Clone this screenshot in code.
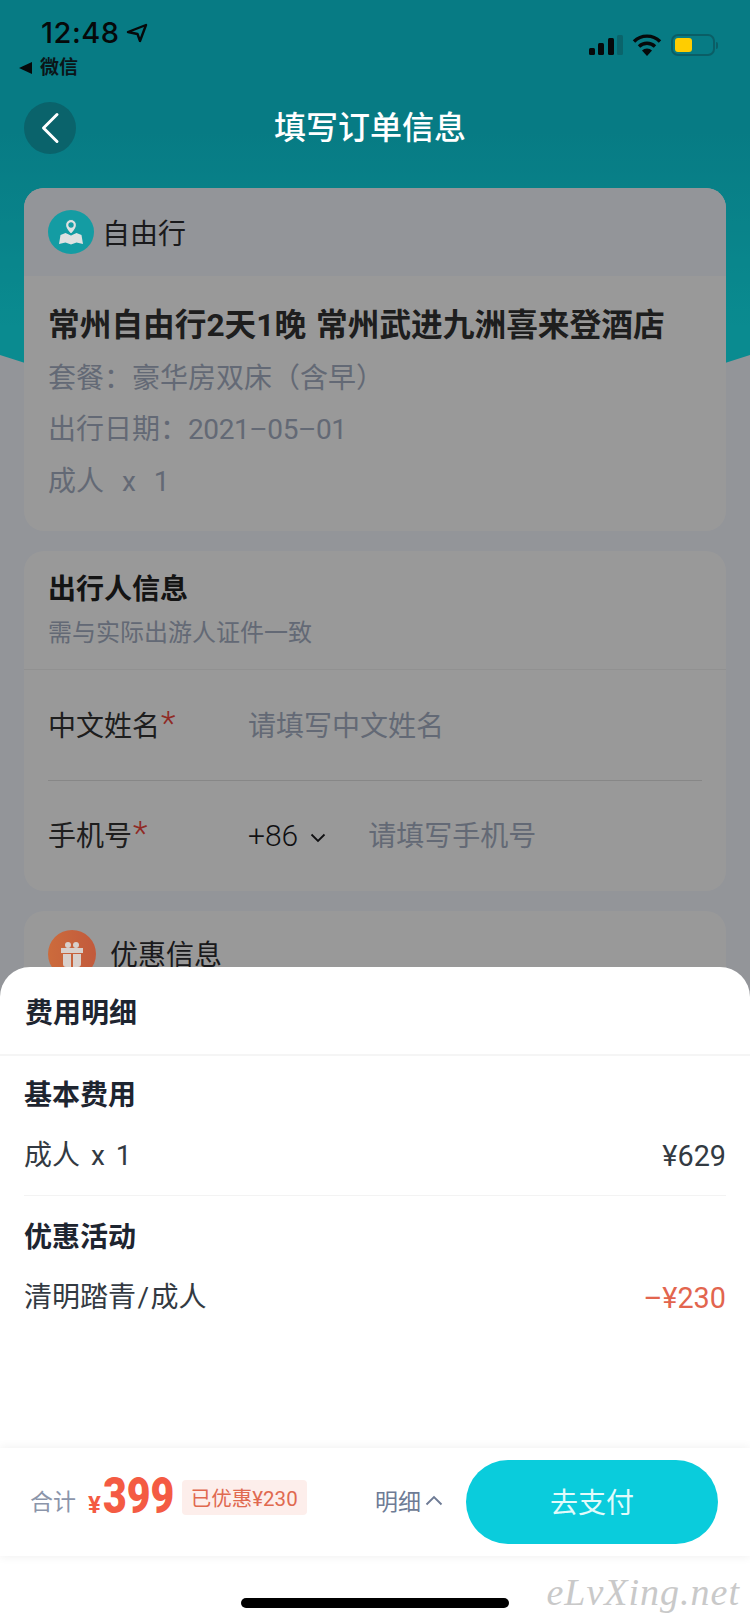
<div class="page">
  <svg class="hero" viewBox="0 0 750 480" width="750" height="480" aria-hidden="true">
    <defs>
      <linearGradient id="heroFill" x1="0" y1="0" x2="0" y2="1">
        <stop offset="0.3" stop-color="#0dcddc" />
        <stop offset="0.78" stop-color="#11e8f0" />
      </linearGradient>
    </defs>
    <path d="M0 0H750V355Q375 480 0 355Z" fill="url(#heroFill)" />
  </svg>

  <div class="content">
    <div class="spacer-top"></div>
    <section class="card">
      <div class="trip-head">
        <span class="round teal">
          <svg viewBox="0 0 46 44" width="46" height="44" aria-hidden="true">
            <path d="M12.500 25l5-2 5.500 2.500 5.500-2.500 5 2 1.500 9-6.500-1.500-5.500 2-5.500-2-6.500 1.500z" fill="#dfe1e1" />
            <path fill-rule="evenodd" d="M23 9.500a5.500 5.500 0 0 1 5.500 5.500c0 3.200-3.300 7.200-5.500 9.500c-2.200-2.300-5.500-6.300-5.500-9.500a5.500 5.500 0 0 1 5.500-5.500zm0 3.400a2.100 2.100 0 1 0 0 4.200a2.100 2.100 0 0 0 0-4.200z" fill="#dfe1e1" stroke="#149ca3" stroke-width="1.200" />
          </svg>
        </span>
        <span class="head-text trip-label">自由行</span>
      </div>
      <div class="trip-body">
        <h2 class="trip-title">常州自由行2天1晚 常州武进九洲喜来登酒店</h2>
        <p class="line">套餐：豪华房双床（含早）</p>
        <p class="line">出行日期：<span class="tight">2021–05–01</span></p>
        <p class="line last"><span class="qty">成人&nbsp; x&nbsp; 1</span></p>
      </div>
    </section>

    <section class="card">
      <div class="info-head">
        <h3 class="info-title">出行人信息</h3>
        <p class="info-sub">需与实际出游人证件一致</p>
      </div>
      <div class="row ruled">
        <span class="label">中文姓名<i class="req">*</i></span>
        <span class="placeholder">请填写中文姓名</span>
      </div>
      <div class="row">
        <span class="label second-label">手机号<i class="req">*</i></span>
        <span class="code">+86</span>
        <svg class="code-arrow" viewBox="0 0 16 10" width="16" height="10" aria-hidden="true">
          <path d="M1.500 1.500L8 8l6.500-6.500" fill="none" stroke="#1c1c1f" stroke-width="1.800" />
        </svg>
        <span class="placeholder lifted">请填写手机号</span>
      </div>
    </section>

    <section class="card">
      <div class="promo-head">
        <span class="round orange">
          <svg viewBox="0 0 48 48" width="48" height="48" aria-hidden="true">
            <path d="M13 18h22v5H13z" fill="#d8d0cc" />
            <path d="M15 24h8v13h-5a3 3 0 0 1-3-3zM25 24h8v10a3 3 0 0 1-3 3h-5z" fill="#d8d0cc" />
            <circle cx="20" cy="15" r="3" fill="#d8d0cc" />
            <circle cx="28" cy="15" r="3" fill="#d8d0cc" />
          </svg>
        </span>
        <span class="head-text promo-label">优惠信息</span>
      </div>
      <div class="promo-rest"></div>
    </section>
  </div>

  <div class="scrim"></div>

  <header class="top">
    <div class="status">
      <div class="status-left">
        <div class="time-row">
          <span class="time">12:48</span>
          <svg viewBox="0 0 22 20" width="22" height="20" aria-hidden="true">
            <path d="M2 9L20 2l-6 16-2.500-7z" fill="none" stroke="#06090a" stroke-width="2.400" stroke-linejoin="round" />
          </svg>
        </div>
        <div class="back-app">
          <svg viewBox="0 0 13 12" width="13" height="12" aria-hidden="true"><path d="M0 6L13 0v12z" fill="#06090a" /></svg>
          <span>微信</span>
        </div>
      </div>
      <div class="status-right">
        <svg viewBox="0 0 34 20" width="34" height="20" aria-hidden="true">
          <rect x="0" y="13" width="6" height="7" rx="1.500" fill="#06090a" />
          <rect x="9" y="8" width="6" height="12" rx="1.500" fill="#06090a" />
          <rect x="19" y="3" width="6" height="17" rx="1.500" fill="#06090a" />
          <rect x="28" y="0" width="6" height="20" rx="1.500" fill="#0a646b" />
        </svg>
        <svg viewBox="0 0 30 22" width="30" height="22" aria-hidden="true">
          <path d="M2 7.500a18.500 18.500 0 0 1 26 0" fill="none" stroke="#06090a" stroke-width="3.400" />
          <path d="M7 12.500a11.500 11.500 0 0 1 16 0" fill="none" stroke="#06090a" stroke-width="3.400" />
          <path d="M15 22l-5-5.500a7 7 0 0 1 10 0z" fill="#06090a" />
        </svg>
        <div class="battery"><span class="battery-fill"></span></div>
        <span class="battery-nub"></span>
      </div>
    </div>
    <nav class="nav">
      <span class="back">
        <svg viewBox="0 0 20 32" width="20" height="32" aria-hidden="true">
          <path d="M17 2.500L3.500 16 17 29.500" fill="none" stroke="#fff" stroke-width="3" stroke-linecap="round" stroke-linejoin="round" />
        </svg>
      </span>
      <h1 class="nav-title">填写订单信息</h1>
    </nav>
  </header>

  <aside class="sheet">
    <div class="sheet-head">费用明细</div>
    <div class="fees">
      <div class="fee-block">
        <h4 class="fee-title">基本费用</h4>
        <div class="fee-row"><span class="qty-small">成人 x 1</span><span class="money">¥629</span></div>
      </div>
      <div class="fee-block second">
        <h4 class="fee-title">优惠活动</h4>
        <div class="fee-row"><span>清明踏青<span class="slash">/</span>成人</span><span class="money minus">–¥230</span></div>
      </div>
    </div>
    <div class="bar">
      <span class="total-label">合计</span>
      <span class="yen">¥</span>
      <span class="amount">399</span>
      <span class="saved">已优惠¥230</span>
      <span class="detail">明细
        <svg viewBox="0 0 18 11" width="18" height="11" aria-hidden="true">
          <path d="M1.500 9.500L9 2l7.500 7.500" fill="none" stroke="#6e7b95" stroke-width="1.900" />
        </svg>
      </span>
      <button class="pay" type="button">去支付</button>
    </div>
    <div class="home"><span class="home-pill"></span></div>
    <span class="watermark">eLvXing.net</span>
  </aside>
</div>

<style>
  :global(body) {
    margin: 0;
  }
  .page {
    position: relative;
    width: 750px;
    height: 1624px;
    overflow: hidden;
    background: #f5f8ff;
    font-family: Roboto, "Noto Sans CJK SC", sans-serif;
    color: #333;
  }
  h1, h2, h3, h4, p {
    margin: 0;
    font-weight: 400;
  }
  i {
    font-style: normal;
  }
  .hero {
    position: absolute;
    left: 0;
    top: 0;
    display: block;
  }
  .content {
    position: relative;
    display: flex;
    flex-direction: column;
    gap: 20px;
    padding: 0 24px;
  }
  .spacer-top {
    height: 168px;
  }
  .card {
    background: #fff;
    border-radius: 20px;
    overflow: hidden;
  }
  .trip-head {
    display: flex;
    align-items: center;
    gap: 8px;
    height: 88px;
    padding-left: 24px;
    background: #f5f8ff;
  }
  .round {
    display: block;
    border-radius: 50%;
    flex: none;
    position: relative;
    z-index: 1;
  }
  .round svg {
    display: block;
  }
  .teal {
    width: 46px;
    height: 44px;
    background: #149ca3;
  }
  .orange {
    width: 48px;
    height: 48px;
    background: linear-gradient(90deg, #cc6b3c, #c25a3c);
  }
  .head-text {
    font-size: 28px;
    line-height: 40px;
    color: #2c2c30;
  }
  .trip-label {
    margin-top: 6px;
  }
  .promo-label {
    margin-top: 4px;
  }
  .trip-body {
    padding: 28px 24px 24px;
  }
  .trip-title {
    font-size: 31.700px;
    line-height: 44px;
    font-weight: 700;
    word-spacing: 2px;
    white-space: nowrap;
    color: #333;
    margin-bottom: 5px;
  }
  .line {
    font-size: 28px;
    line-height: 51px;
    color: #a6afc4;
  }
  .tight {
    letter-spacing: -0.400px;
  }
  .qty {
    word-spacing: 2px;
  }
  .line.last {
    margin-top: 1px;
  }
  .info-head {
    padding: 20px 24px 19px;
    border-bottom: 1px solid #f2f2f2;
  }
  .info-title {
    font-size: 28px;
    line-height: 38px;
    font-weight: 700;
    color: #222;
  }
  .info-sub {
    margin-top: 7px;
    font-size: 24px;
    line-height: 34px;
    color: #a6afc4;
  }
  .row {
    display: flex;
    align-items: center;
    height: 110px;
    padding: 0 24px;
    font-size: 28px;
    position: relative;
  }
  .row.ruled::after {
    content: "";
    position: absolute;
    left: 24px;
    right: 24px;
    bottom: 0;
    height: 1px;
    background: #e2e2e2;
  }
  .row.ruled {
    height: 111px;
    padding-bottom: 1px;
    box-sizing: border-box;
  }
  .label {
    width: 200px;
    flex: none;
    color: #333;
    line-height: 40px;
    margin-top: 4px;
  }
  .second-label {
    margin-top: 2px;
  }
  .req {
    color: #f0463c;
    font-size: 34px;
    font-weight: 300;
    line-height: 20px;
    margin-left: 1px;
    vertical-align: 1px;
  }
  .placeholder {
    color: #a6afc4;
    margin-bottom: 2px;
  }
  .placeholder.lifted {
    margin-bottom: 4px;
  }
  .code {
    font-size: 30px;
    font-weight: 300;
    color: #1c1c1f;
    margin-bottom: 2px;
  }
  .code-arrow {
    margin: 4px 42px 0 12px;
  }
  .promo-head {
    display: flex;
    align-items: center;
    gap: 14px;
    padding: 19px 24px 0;
  }
  .promo-rest {
    height: 120px;
  }
  .scrim {
    position: absolute;
    inset: 0;
    background: rgba(0, 0, 0, 0.4);
  }
  .top {
    position: absolute;
    left: 0;
    top: 0;
    width: 100%;
  }
  .status {
    display: flex;
    justify-content: space-between;
    height: 102px;
    box-sizing: border-box;
    padding: 17px 32px 0 19px;
  }
  .status-left {
    display: flex;
    flex-direction: column;
  }
  .time-row {
    display: flex;
    align-items: center;
    gap: 7px;
    height: 32px;
    padding-left: 22px;
  }
  .time {
    font-size: 29px;
    font-weight: 500;
    line-height: 32px;
    letter-spacing: 0.500px;
    color: #06090a;
    font-family: Inter, Roboto, sans-serif;
  }
  .back-app {
    display: flex;
    align-items: center;
    gap: 8px;
    margin-top: 5px;
    font-size: 19px;
    line-height: 28px;
    font-weight: 700;
    color: #0b1518;
  }
  .status-right {
    display: flex;
    align-items: center;
    height: 22px;
    margin-top: 17px;
  }
  .status-right svg:nth-child(2) {
    margin: 0 9px;
  }
  .battery {
    width: 44px;
    height: 22px;
    box-sizing: border-box;
    border: 2px solid #0a5e66;
    border-radius: 7px;
    padding: 2px;
    display: flex;
  }
  .battery-fill {
    width: 17px;
    background: #ffcd00;
    border-radius: 3px;
  }
  .battery-nub {
    width: 2px;
    height: 7px;
    margin-left: 1px;
    background: #0a5e66;
    border-radius: 0 2px 2px 0;
  }
  .nav {
    position: relative;
    display: flex;
    align-items: center;
    justify-content: center;
    height: 52px;
  }
  .back {
    position: absolute;
    left: 24px;
    top: 0;
    width: 52px;
    height: 52px;
    border-radius: 50%;
    background: #0a636b;
    display: flex;
    align-items: center;
    justify-content: center;
  }
  .nav-title {
    font-size: 32px;
    line-height: 48px;
    font-weight: 500;
    color: #fff;
    margin-right: 10px;
  }
  .sheet {
    position: absolute;
    left: 0;
    right: 0;
    bottom: 0;
    z-index: 2;
    height: 657px;
    background: #fff;
    border-radius: 30px 30px 0 0;
    display: flex;
    flex-direction: column;
    color: #2a3038;
  }
  .sheet-head {
    height: 87px;
    box-sizing: content-box;
    flex: none;
    display: flex;
    align-items: center;
    padding-left: 25px;
    font-size: 28px;
    font-weight: 700;
    color: #1e2530;
    border-bottom: 2px solid #f5f5f5;
  }
  .fees {
    flex: 1;
    padding: 0 24px;
  }
  .fee-block {
    padding: 20px 0 19px;
  }
  .fee-block.second {
    border-top: 1px solid #f3f3f3;
    padding-top: 22px;
  }
  .fee-title {
    font-size: 28px;
    line-height: 40px;
    font-weight: 700;
    color: #1e2530;
  }
  .fee-row {
    display: flex;
    justify-content: space-between;
    margin-top: 20px;
    font-size: 28px;
    line-height: 40px;
    color: #333a42;
  }
  .qty-small {
    word-spacing: 4px;
  }
  .slash {
    margin: 0 1.500px;
  }
  .money {
    font-size: 28.800px;
  }
  .minus {
    color: #e2654e;
  }
  .bar {
    flex: none;
    height: 108px;
    box-sizing: border-box;
    display: flex;
    align-items: center;
    padding: 0 32px 0 30px;
    background: #fff;
    box-shadow: 0 0 10px rgba(0, 0, 0, 0.07);
    position: relative;
  }
  .total-label {
    font-size: 23px;
    color: #8b95aa;
    margin-right: 12px;
    margin-bottom: 4px;
  }
  .yen {
    font-size: 24px;
    font-weight: 700;
    color: #f45b43;
    margin-top: 6px;
  }
  .amount {
    font-size: 50px;
    line-height: 56px;
    font-weight: 900;
    color: #f45b43;
    transform: scaleX(0.82);
    transform-origin: left center;
    margin: 0 -17px 12px 2px;
  }
  .saved {
    margin: 0 0 10px 9px;
    height: 35px;
    box-sizing: border-box;
    padding: 0 9px;
    display: flex;
    align-items: center;
    font-size: 20.500px;
    color: #e0694f;
    background: #fdeeeb;
    border-radius: 4px;
    white-space: nowrap;
  }
  .detail {
    margin-left: auto;
    margin-bottom: 4px;
    display: flex;
    align-items: center;
    gap: 4px;
    font-size: 23px;
    color: #6e7b95;
  }
  .pay {
    margin-left: 23px;
    width: 252px;
    height: 84px;
    padding: 0 0 2px;
    border: 0;
    border-radius: 42px;
    background: #0accdc;
    color: #e2fbfb;
    font: inherit;
    font-size: 28px;
  }
  .home {
    flex: none;
    height: 68px;
    display: flex;
    justify-content: center;
    padding-top: 42px;
    box-sizing: border-box;
  }
  .home-pill {
    width: 268px;
    height: 10px;
    border-radius: 5px;
    background: #000;
  }
  .watermark {
    position: absolute;
    right: 10px;
    bottom: 10px;
    font-family: "Liberation Serif", serif;
    font-style: italic;
    font-size: 38px;
    line-height: 44px;
    letter-spacing: 1px;
    color: #c9c9c9;
  }
</style>
